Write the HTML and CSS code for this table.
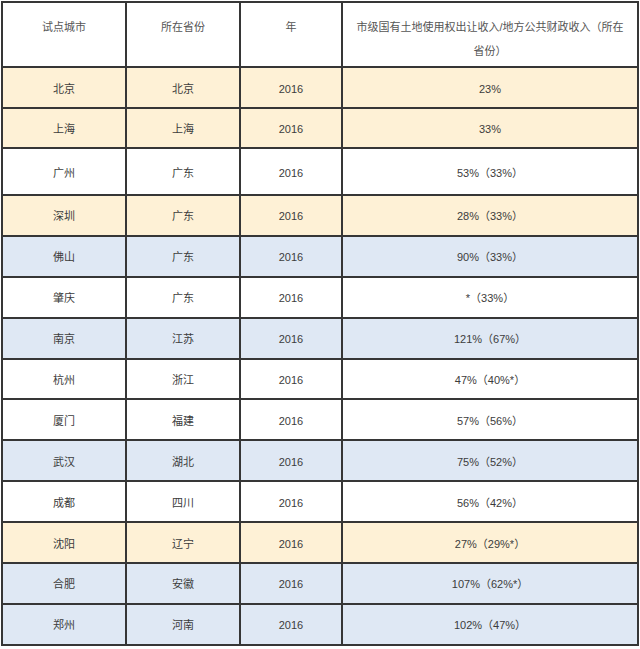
FILE: index.html
```html
<!DOCTYPE html>
<html lang="zh-CN">
<head>
<meta charset="utf-8">
<link rel="stylesheet" href="styles.css">
</head>
<body>
<div class="wrap">
<table class="data">
  <colgroup>
    <col class="c1"><col class="c2"><col class="c3"><col class="c4">
  </colgroup>
  <thead>
    <tr class="head">
      <th>试点城市</th>
      <th>所在省份</th>
      <th>年</th>
      <th class="wide">市级国有土地使用权出让收入/地方公共财政收入（所在省份）</th>
    </tr>
  </thead>
  <tbody>
    <tr class="y r41"><td>北京</td><td>北京</td><td>2016</td><td>23%</td></tr>
    <tr class="y r40"><td>上海</td><td>上海</td><td>2016</td><td>33%</td></tr>
    <tr class="w r47"><td>广州</td><td>广东</td><td>2016</td><td>53%（33%）</td></tr>
    <tr class="y"><td>深圳</td><td>广东</td><td>2016</td><td>28%（33%）</td></tr>
    <tr class="b"><td>佛山</td><td>广东</td><td>2016</td><td>90%（33%）</td></tr>
    <tr class="w"><td>肇庆</td><td>广东</td><td>2016</td><td>*（33%）</td></tr>
    <tr class="b"><td>南京</td><td>江苏</td><td>2016</td><td>121%（67%）</td></tr>
    <tr class="w"><td>杭州</td><td>浙江</td><td>2016</td><td>47%（40%*）</td></tr>
    <tr class="w"><td>厦门</td><td>福建</td><td>2016</td><td>57%（56%）</td></tr>
    <tr class="b"><td>武汉</td><td>湖北</td><td>2016</td><td>75%（52%）</td></tr>
    <tr class="w"><td>成都</td><td>四川</td><td>2016</td><td>56%（42%）</td></tr>
    <tr class="y"><td>沈阳</td><td>辽宁</td><td>2016</td><td>27%（29%*）</td></tr>
    <tr class="b"><td>合肥</td><td>安徽</td><td>2016</td><td>107%（62%*）</td></tr>
    <tr class="b"><td>郑州</td><td>河南</td><td>2016</td><td>102%（47%）</td></tr>
  </tbody>
</table>
</div>
</body>
</html>
```

FILE: styles.css
```css
html, body {
  margin: 0;
  padding: 0;
  background: #ffffff;
}
.wrap {
  padding: 1px 0 0 1px;
}
.data {
  border-collapse: collapse;
  table-layout: fixed;
  width: 636px;
  font-family: "Liberation Sans", "Noto Sans CJK SC", sans-serif;
  font-size: 11px;
  color: #3c3c3c;
}
.c1 { width: 124px; }
.c2 { width: 114px; }
.c3 { width: 102px; }
.c4 { width: 296px; }
.data th,
.data td {
  border: 2px solid #363636;
  text-align: center;
  padding: 0 10px;
  line-height: 24px;
}
.data th {
  font-weight: normal;
  color: #555555;
  vertical-align: top;
  padding-top: 12px;
}
.head {
  height: 65px;
}
.data tbody tr {
  height: 40.9px;
}
.data tbody tr.r41 { height: 41px; }
.data tbody tr.r40 { height: 40px; }
.data tbody tr.r47 { height: 47px; }
.data td {
  vertical-align: middle;
  padding-top: 2px;
}
.y { background: #fef1d6; }
.b { background: #dfe8f4; }
.w { background: #ffffff; }
```
